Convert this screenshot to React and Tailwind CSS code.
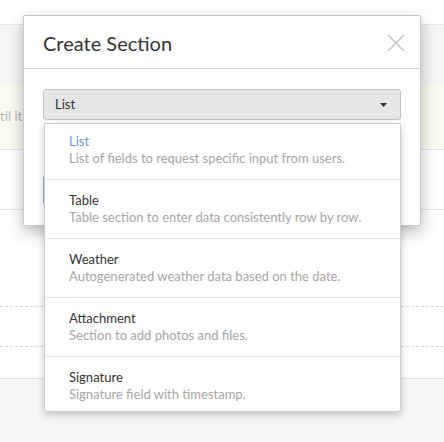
import React from 'react';

const sectionTypes = [
  { name: 'List', description: 'List of fields to request specific input from users.', active: true },
  { name: 'Table', description: 'Table section to enter data consistently row by row.' },
  { name: 'Weather', description: 'Autogenerated weather data based on the date.' },
  { name: 'Attachment', description: 'Section to add photos and files.' },
  { name: 'Signature', description: 'Signature field with timestamp.' },
];

const CloseIcon = () => (
  <svg width="18" height="18" viewBox="0 0 18 18" fill="none">
    <path d="M1 1L17 17M17 1L1 17" stroke="#c2c2c2" strokeWidth="1.4" />
  </svg>
);

const App = () => {
  return (
    <div className="relative w-full h-[442px] overflow-hidden bg-white font-['Lato','Noto_Sans',sans-serif]">
      {/* Page behind the modal */}
      <div className="flex flex-col">
        <div className="h-[24px] bg-white" />
        <div className="h-[61px] bg-[#f6f6f6] border-t border-[#e6e6e6]" />
        <div className="h-[65px] bg-[#fcfbf2] border-b border-[#e4e4e4] flex items-center">
          <span className="text-[13px] text-[#b5b5b5]">til it</span>
        </div>
        <div className="h-[60px] border-b border-[#e4e4e4]" />
        <div className="h-[97px] border-b border-dashed border-[#d8d8d8]" />
        <div className="h-[40px] border-b border-dashed border-[#d8d8d8]" />
        <div className="h-[32px] border-b border-[#e2e2e2]" />
        <div className="h-[80px] bg-[#f7f7f7]" />
      </div>

      {/* Modal */}
      <div className="absolute left-[23px] top-[15px] w-[398px] bg-white border border-[#c9c9c9] rounded-[2px] shadow-[0_6px_16px_rgba(0,0,0,0.28)]">
        <div className="h-[53px] px-[19px] flex items-center justify-between border-b border-[#d6d6d6]">
          <h2 className="text-[20px] text-[#333] leading-none pt-[2px]">Create Section</h2>
          <button className="mr-[-4px] mt-[1px]">
            <CloseIcon />
          </button>
        </div>
        <div className="px-[19px] pt-[20px] pb-[20px]">
          <div className="relative">
            <div className="h-[31px] flex items-center justify-between pl-[11px] pr-[13px] bg-[#e6e6e6] border border-[#c3c3c3] rounded-[3px]">
              <span className="text-[13px] text-[#333]">List</span>
              <svg width="7" height="4" viewBox="0 0 7 4">
                <path d="M0 0H7L3.5 4Z" fill="#333" />
              </svg>
            </div>

            {/* Dropdown menu */}
            <div className="absolute left-[1px] right-0 top-[34px] z-10 h-[289px] overflow-hidden bg-white border border-[#cfcfcf] rounded-b-[3px] shadow-[0_3px_8px_rgba(0,0,0,0.22)]">
              <ul className="mt-[-3px]">
                {sectionTypes.map((type) => (
                  <li
                    key={type.name}
                    className="px-[24px] pt-[12px] pb-[12px] border-b border-[#e4e4e4] last:border-b-0"
                  >
                    <div className={`text-[13px] leading-[17px] ${type.active ? 'text-[#6b97dd]' : 'text-[#333]'}`}>
                      {type.name}
                    </div>
                    <div className="text-[13px] leading-[17px] text-[#a6a6a6]">{type.description}</div>
                  </li>
                ))}
              </ul>
            </div>
          </div>
          <div className="mt-[55px] h-[30px] border border-[#8aaee3] rounded-[3px]" />
        </div>
      </div>
    </div>
  );
};

export default App;
